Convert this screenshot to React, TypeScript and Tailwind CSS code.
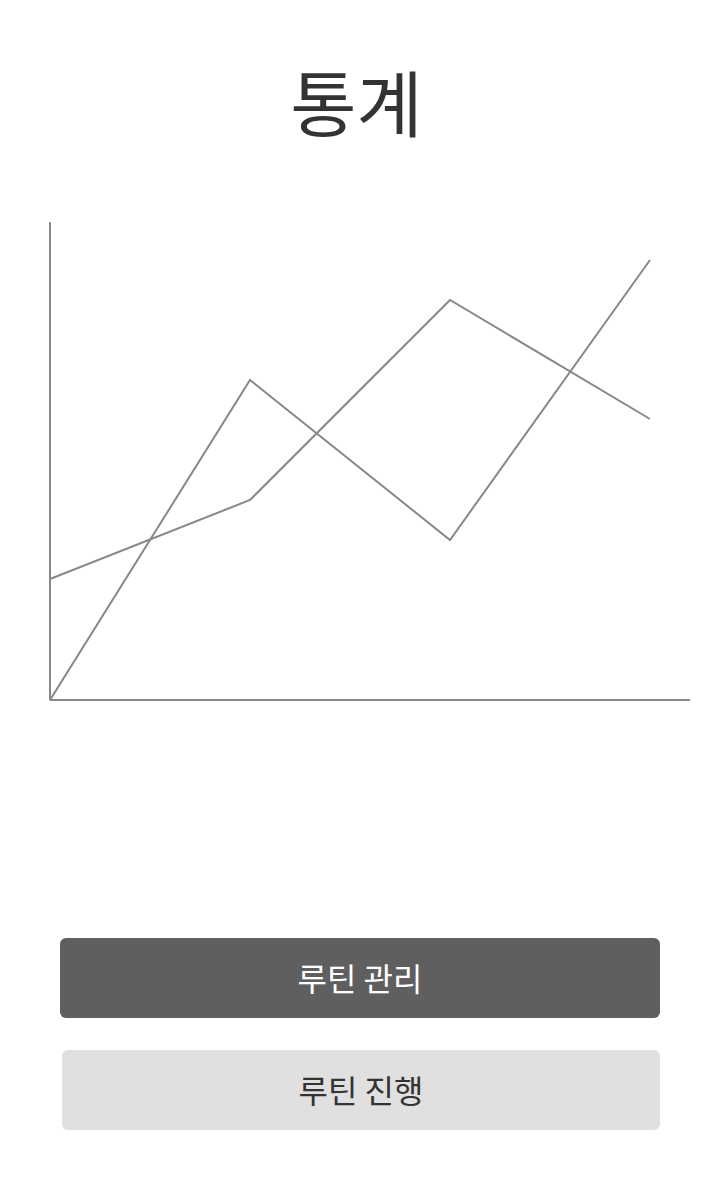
export default function App() {
  const font = { fontFamily: '"Noto Sans CJK KR", "Noto Sans", sans-serif' };
  // chart coords relative to the svg (top = 200px on page)
  const lineA = "50,500 250,180 450,340 650,60";
  const lineB = "50,379 250,300 450,100 650,219";

  return (
    <div className="w-[720px] h-[1200px] bg-white flex flex-col" style={font}>
      <div className="h-[200px] flex items-center justify-center pr-[7px]">
        <h1 className="text-[72px] leading-none text-[#333333]">통계</h1>
      </div>

      <svg width="720" height="520" viewBox="0 0 720 520" className="block">
        <g stroke="#888888" strokeWidth="2" fill="none">
          <line x1="50" y1="22" x2="50" y2="500" />
          <line x1="50" y1="500" x2="690" y2="500" />
          <polyline points={lineA} />
          <polyline points={lineB} />
        </g>
      </svg>

      <div className="mt-[218px] flex flex-col gap-8">
        <button className="ml-[60px] w-[600px] h-[80px] rounded-md bg-[#5f5f5f] text-white text-[32px] pb-[3px]">
          루틴 관리
        </button>
        <button className="ml-[62px] w-[598px] h-[80px] rounded-md bg-[#e0e0e0] text-[#333333] text-[32px] pb-[3px]">
          루틴 진행
        </button>
      </div>
    </div>
  );
}
